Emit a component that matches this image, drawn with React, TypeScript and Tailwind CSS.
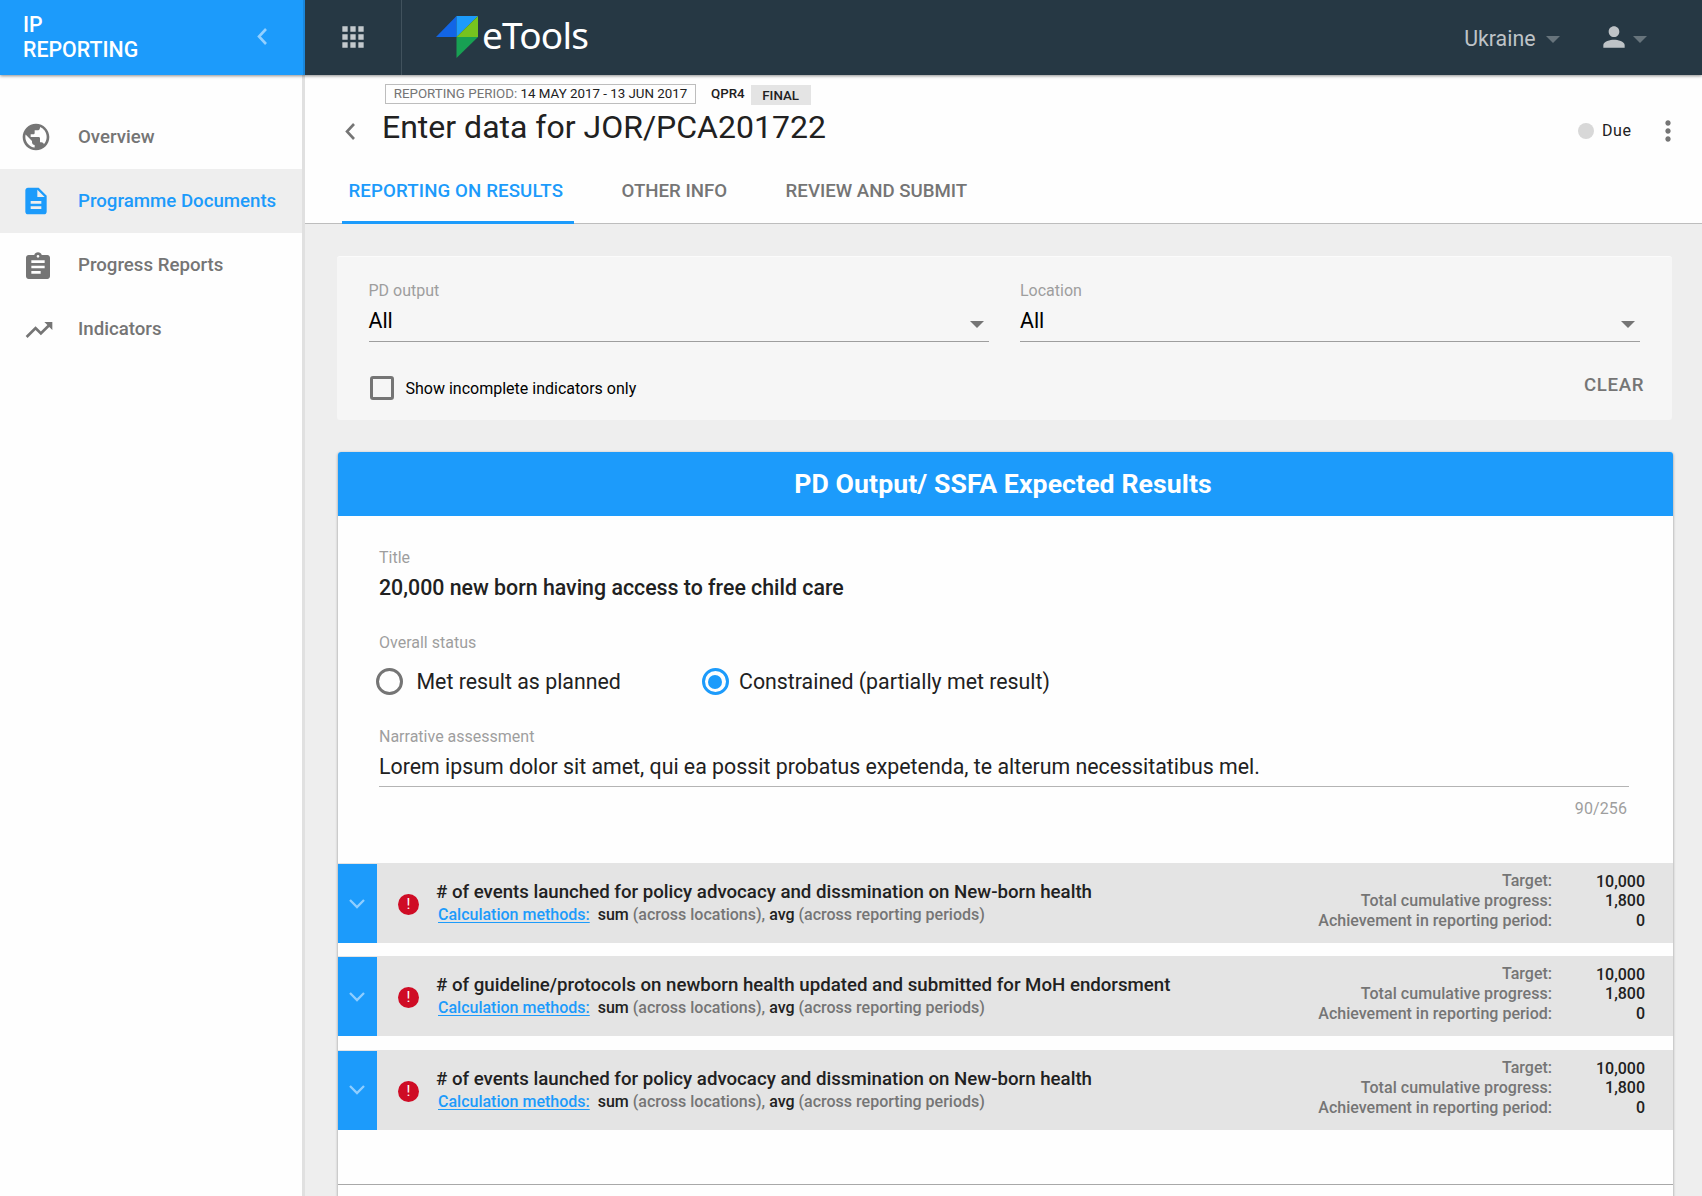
import React from "react";
import {
  MdApps,
  MdAssignment,
  MdDescription,
  MdMoreVert,
  MdPerson,
  MdPublic,
  MdTrendingUp,
} from "react-icons/md";

function Caret({ className }: { className: string }) {
  return (
    <svg viewBox="0 0 14 7" className={`block h-[7px] w-[14px] shrink-0 ${className}`} fill="currentColor">
      <path d="M0 0h14L7 7z" />
    </svg>
  );
}

function Chevron({ className }: { className: string }) {
  return (
    <svg viewBox="0 0 10 17" className={`block h-[17px] w-[10px] shrink-0 ${className}`} fill="none" stroke="currentColor" strokeWidth="2.6">
      <path d="M9 1 2 8.5 9 16" />
    </svg>
  );
}

function Logo() {
  return (
    <svg viewBox="0 0 42 42" className="-mt-[2px] block h-[42px] w-[42px] shrink-0">
      <path d="M20.5 0v21H0z" fill="#1265e6" />
      <path d="M20.5 0H42L20.5 21z" fill="#1c9bfb" />
      <path d="M42 0v21H20.5z" fill="#76c31f" />
      <path d="M20.5 21H42L20.5 42z" fill="#18a053" />
    </svg>
  );
}

const NAV = [
  { label: "Overview", Icon: MdPublic, pad: "pl-[19.5px]", active: false, nudge: "-mt-px" },
  { label: "Programme Documents", Icon: MdDescription, pad: "pl-[19.5px]", active: true, nudge: "-mt-px" },
  { label: "Progress Reports", Icon: MdAssignment, pad: "pl-[22px]", active: false, nudge: "mt-1" },
  { label: "Indicators", Icon: MdTrendingUp, pad: "pl-[23px]", active: false, nudge: "mt-px" },
];

function Sidebar() {
  return (
    <aside className="flex w-[305px] shrink-0 flex-col border-r-[3px] border-[#e0e0e0] bg-[#fefefe] pt-[30px]">
      {NAV.map(({ label, Icon, pad, active, nudge }) => (
        <a key={label} className={`flex h-16 items-center text-[18.67px] font-medium ${active ? "bg-[#eeeeee] text-[#1c9bfb]" : "text-[#757575]"}`}>
          <span className={`w-[78px] shrink-0 ${pad}`}>
            <Icon className={`size-8 ${nudge}`} />
          </span>
          <span className="-mt-px whitespace-nowrap">{label}</span>
        </a>
      ))}
    </aside>
  );
}

function TopBar() {
  return (
    <header className="relative z-10 flex h-[75px] shrink-0 bg-[#263844] shadow-[0_1px_3px_rgba(0,0,0,0.45)]">
      <div className="flex w-[305px] items-center justify-between border-r-2 border-[#1a86da] bg-[#1c9bfb] pr-[36px] pl-[23px] text-white">
        <div className="-mt-px text-[21.33px] leading-[25px] font-medium">
          IP
          <br />
          REPORTING
        </div>
        <Chevron className="-mt-[2px] text-[#93d0ff]" />
      </div>
      <div className="flex w-[97px] items-center justify-center border-r border-[#41525d] text-[#c3c9cd]">
        <MdApps className="-mt-px size-8" />
      </div>
      <div className="flex items-center pl-[34px]">
        <Logo />
        <span className="-mt-[6px] ml-1 font-['Noto_Sans'] text-[37px] leading-none tracking-[-0.8px] text-white">eTools</span>
      </div>
      <div className="ml-auto flex items-center pr-[55.5px] text-[#bec3c7]">
        <span className="mt-[2px] text-[21.33px]">Ukraine</span>
        <Caret className="mt-1 ml-[10px] text-[#67747c]" />
        <MdPerson className="-mt-px ml-[38px] size-8" />
        <Caret className="mt-1 ml-[3px] text-[#67747c]" />
      </div>
    </header>
  );
}

function PageHeader() {
  return (
    <div className="h-[149px] border-b border-[#bdbdbd] bg-[#fefefe]">
      <div className="flex h-[76px] items-start">
        <Chevron className="mt-[48px] ml-[40px] text-[#757575]" />
        <div className="ml-[30px] pt-[9px]">
          <div className="flex text-[13.33px] text-[#212121]">
            <div className="flex h-5 w-[311px] items-center justify-center border border-[#bdbdbd] whitespace-pre">
              <span className="text-[#757575]">REPORTING PERIOD: </span>14 MAY 2017 - 13 JUN 2017
            </div>
            <span className="ml-[15px] leading-[20px] font-medium">QPR4</span>
            <span className="mt-px ml-[6px] flex h-5 w-[60px] items-center justify-center bg-[#e4e4e4] pb-px font-medium">
              <span className="mt-[2px]">FINAL</span>
            </span>
          </div>
          <h1 className="mt-[3px] -ml-[3px] text-[32px] leading-[38px] text-[#212121]">Enter data for JOR/PCA201722</h1>
        </div>
        <div className="mt-[40px] ml-auto flex items-center pr-[18px]">
          <span className="size-4 rounded-full bg-[#d8d8d8]" />
          <span className="ml-[7.5px] text-base tracking-[0.6px] text-[#212121]">Due</span>
          <MdMoreVert className="ml-[20.5px] size-8 text-[#757575]" />
        </div>
      </div>
      <nav className="flex h-[73px] pl-[37px] text-[18.67px] font-medium text-[#757575]">
        <div className="h-[73px] w-[232px] border-b-[3px] border-[#1c9bfb] pt-[26px] pl-[6.5px] tracking-[0.12px] whitespace-nowrap text-[#1c9bfb]">REPORTING ON RESULTS</div>
        <div className="pt-[26px] pl-[47.5px]">OTHER INFO</div>
        <div className="pt-[26px] pl-[58.5px]">REVIEW AND SUBMIT</div>
      </nav>
    </div>
  );
}

function Select({ label }: { label: string }) {
  return (
    <div className="w-[620px] border-b border-[#9e9e9e]">
      <div className="h-5 text-base leading-5 text-[#9e9e9e]">{label}</div>
      <div className="mt-2 flex h-8 items-start justify-between pr-[5px] text-[21.33px] leading-[24px] text-black">
        All
        <Caret className="mt-3 text-[#757575]" />
      </div>
    </div>
  );
}

function Filters() {
  return (
    <section className="mt-8 ml-[31.5px] h-[164px] w-[1335.5px] rounded-[3px] border-t border-[#fbfbfb] bg-[#f6f6f6] pr-[32px] pl-8">
      <div className="flex justify-between pt-[24px]">
        <Select label="PD output" />
        <Select label="Location" />
      </div>
      <div className="flex items-start">
        <span className="mt-[34px] ml-px size-6 rounded-[3px] border-[3px] border-[#757575]" />
        <span className="mt-[35px] ml-3 text-base leading-6 text-black">Show incomplete indicators only</span>
        <button className="mt-[31px] -mr-1 ml-auto text-[18.67px] leading-6 font-medium tracking-[0.6px] text-[#757575]">CLEAR</button>
      </div>
    </section>
  );
}

function Radio({ checked }: { checked: boolean }) {
  return (
    <span className={`flex size-[27px] shrink-0 items-center justify-center rounded-full border-[3px] ${checked ? "border-[#1c9bfb]" : "border-[#757575]"}`}>
      {checked && <span className="size-[14px] rounded-full bg-[#1c9bfb]" />}
    </span>
  );
}

const INDICATORS = [
  "# of events launched for policy advocacy and dissmination on New-born health",
  "# of guideline/protocols on newborn health updated and submitted for MoH endorsment",
  "# of events launched for policy advocacy and dissmination on New-born health",
];

function Indicator({ title }: { title: string }) {
  return (
    <div className="flex h-[80px] bg-[#e4e4e4] text-base font-medium text-[#212121]">
      <div className="mt-px flex w-[39px] items-center justify-center bg-[#1c9bfb] pr-[2px] text-[#8fceff]">
        <svg viewBox="0 0 16 10" className="h-[10px] w-4" fill="none" stroke="currentColor" strokeWidth="2.3">
          <path d="m1 1 7 7 7-7" />
        </svg>
      </div>
      <div className="mt-[31px] ml-[21px] flex size-[21px] items-center justify-center rounded-full bg-[#cf0c25] text-[15px] leading-none font-normal text-white">!</div>
      <div className="ml-[17px] pt-[17px]">
        <div className="text-[18.67px] leading-6">{title}</div>
        <div className="-mt-px ml-[2px] text-base leading-[23px] whitespace-pre text-[#757575]">
          <span className="text-[#1c9bfb] underline underline-offset-2">Calculation methods:</span>
          {"  "}
          <span className="text-[#212121]">sum</span> (across locations), <span className="text-[#212121]">avg</span> (across reporting periods)
        </div>
      </div>
      <div className="ml-auto pt-2 text-right leading-5 text-[#757575]">
        <div>Target:</div>
        <div className="tracking-[0.06px]">Total cumulative progress:</div>
        <div>Achievement in reporting period:</div>
      </div>
      <div className="mr-[28px] w-[93px] pt-[9px] text-right leading-5 text-[#212121]">
        <div className="h-[19px]">10,000</div>
        <div>1,800</div>
        <div>0</div>
      </div>
    </div>
  );
}

function Results() {
  return (
    <section className="mt-8 ml-[33px] h-[900px] w-[1335px] rounded-t-[3px] bg-[#fefefe] shadow-[0_1px_3px_rgba(0,0,0,0.4)]">
      <h2 className="flex h-16 items-center justify-center rounded-t-[3px] bg-[#1c9bfb] pr-[5px] text-[26.67px] font-bold tracking-[0.07px] text-white">PD Output/ SSFA Expected Results</h2>
      <div className="pr-11 pl-[41px] text-[21.33px] text-[#212121]">
        <div className="pt-8 text-base leading-5 text-[#9e9e9e]">Title</div>
        <div className="mt-2 leading-6 font-medium">20,000 new born having access to free child care</div>
        <div className="mt-[33px] text-base leading-5 text-[#9e9e9e]">Overall status</div>
        <div className="-ml-[3px] mt-[15px] flex h-[27px] items-center">
          <Radio checked={false} />
          <span className="ml-[13.5px] w-[285px]">Met result as planned</span>
          <Radio checked />
          <span className="ml-[10.5px]">Constrained (partially met result)</span>
        </div>
        <div className="mt-8 text-base leading-5 text-[#9e9e9e]">Narrative assessment</div>
        <div className="mt-2 h-8 border-b border-[#b4b4b4] leading-6">Lorem ipsum dolor sit amet, qui ea possit probatus expetenda, te alterum necessitatibus mel.</div>
        <div className="mt-3 pr-[2px] text-right text-base leading-5 tracking-[0.1px] text-[#9e9e9e]">90/256</div>
      </div>
      <div className="mt-11 flex flex-col gap-[13.33px]">
        {INDICATORS.map((title, i) => (
          <Indicator key={i} title={title} />
        ))}
      </div>
      <div className="mt-[54px] border-t border-[#a8a8a8]" />
    </section>
  );
}

export default function App() {
  return (
    <div className="flex h-[1196px] w-[1702px] flex-col overflow-hidden bg-[#eeeeee] font-[Roboto,sans-serif]">
      <TopBar />
      <div className="flex min-h-0 flex-1">
        <Sidebar />
        <main className="min-w-0 flex-1 overflow-hidden">
          <PageHeader />
          <Filters />
          <Results />
        </main>
      </div>
    </div>
  );
}
